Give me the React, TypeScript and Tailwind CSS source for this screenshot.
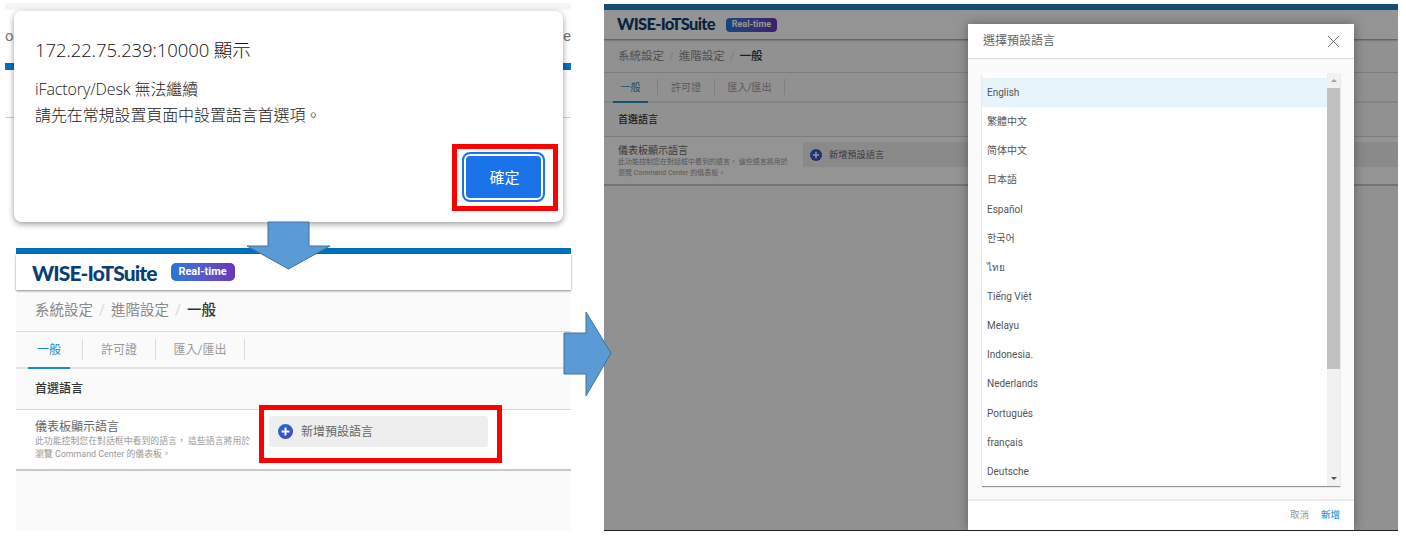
import React from "react";

const LANGUAGES = [
  "English",
  "繁體中文",
  "简体中文",
  "日本語",
  "Español",
  "한국어",
  "ไทย",
  "Tiếng Việt",
  "Melayu",
  "Indonesia.",
  "Nederlands",
  "Português",
  "français",
  "Deutsche",
];

const PlusIcon = ({ size }: { size: number }) => (
  <svg width={size} height={size} viewBox="0 0 16 16" className="shrink-0">
    <defs>
      <linearGradient id="plusFill" x1="0" y1="0" x2="1" y2="1">
        <stop offset="0" stopColor="#1f6fd0" />
        <stop offset="1" stopColor="#4a3fc4" />
      </linearGradient>
    </defs>
    <circle cx="8" cy="8" r="8" fill="url(#plusFill)" />
    <path d="M8 3.8v8.4M3.8 8h8.4" stroke="#fff" strokeWidth="2" />
  </svg>
);

const LargePage = () => (
  <div className="absolute left-[16px] top-[248px] flex h-[283px] w-[555px] flex-col bg-[#fafafa]">
    <div className="h-[6px] bg-[#0070ba]" />
    <div className="flex h-[36px] items-center gap-[14px] bg-white pl-[16px] shadow-[0_1px_2px_rgba(0,0,0,0.45)]">
      <span className="font-['Lato'] text-[21px] leading-none font-black tracking-[-0.9px] text-[#0b3f73]">WISE-IoTSuite</span>
      <span className="flex h-[18px] w-[64px] items-center justify-center rounded-[5px] bg-gradient-to-r from-[#1f78d8] to-[#6a35b8] text-[11px] font-bold text-white">
        Real-time
      </span>
    </div>
    <div className="flex h-[42px] items-center border-b border-[#d8d8d8] pl-[19px] text-[14.500px]">
      <span className="text-[#8a8a8a]">系統設定</span>
      <span className="mx-[6px] text-[#d8d8d8]">/</span>
      <span className="text-[#8a8a8a]">進階設定</span>
      <span className="mx-[6px] text-[#d8d8d8]">/</span>
      <span className="font-medium text-[#333]">一般</span>
    </div>
    <div className="flex h-[37px] border-b-2 border-[#e4e4e4] pl-[12px] text-[12px] text-[#9a9a9a]">
      <div className="flex h-[37px] w-[42px] items-center justify-center border-b-2 border-[#1c8ccc] text-[#1c8ccc]">一般</div>
      <div className="my-[7px] ml-[12px] w-px bg-[#dcdcdc]" />
      <div className="flex w-[72px] items-center justify-center">許可證</div>
      <div className="my-[7px] w-px bg-[#dcdcdc]" />
      <div className="flex w-[88px] items-center justify-center">匯入/匯出</div>
      <div className="my-[7px] w-px bg-[#dcdcdc]" />
    </div>
    <div className="flex h-[41px] items-center border-b border-[#d8d8d8] pl-[19px] text-[12px] font-medium text-[#333]">首選語言</div>
    <div className="flex h-[61px] justify-between border-b-2 border-[#c9c9c9] bg-white pl-[19px]">
      <div className="pt-[10px]">
        <div className="text-[12px] leading-[15px] text-[#666]">儀表板顯示語言</div>
        <div className="text-[8.900px] leading-[13px] whitespace-nowrap text-[#999]">
          <div>此功能控制您在對話框中看到的語言， 這些語言將用於</div>
          <div>瀏覽 Command Center 的儀表板。</div>
        </div>
      </div>
      <div className="mt-[6px] mr-[83px] flex h-[31px] w-[219px] items-center gap-[8px] rounded-[3px] bg-[#eeeeee] pl-[9px] text-[12px] text-[#666]">
        <PlusIcon size={15} />
        新增預設語言
      </div>
    </div>
  </div>
);

const DimmedPage = () => (
  <div className="flex h-full flex-col bg-[#fafafa]">
    <div className="h-[6px] bg-[#2a86c4]" />
    <div className="flex h-[29px] items-center gap-[11px] bg-white pl-[13px] shadow-[0_1px_2px_rgba(0,0,0,0.45)]">
      <span className="font-['Lato'] text-[16.500px] leading-none font-black tracking-[-0.7px] text-[#0b3f73]">WISE-IoTSuite</span>
      <span className="flex h-[14px] w-[51px] items-center justify-center rounded-[4px] bg-gradient-to-r from-[#1f78d8] to-[#6a35b8] text-[9px] font-bold text-white">
        Real-time
      </span>
    </div>
    <div className="flex h-[34px] items-center border-b border-[#d8d8d8] pt-[2px] pl-[14px] text-[11.500px]">
      <span className="text-[#8a8a8a]">系統設定</span>
      <span className="mx-[5px] text-[#d8d8d8]">/</span>
      <span className="text-[#8a8a8a]">進階設定</span>
      <span className="mx-[5px] text-[#d8d8d8]">/</span>
      <span className="font-medium text-[#333]">一般</span>
    </div>
    <div className="flex h-[30px] border-b-2 border-[#e4e4e4] pl-[9px] text-[10px] text-[#9a9a9a]">
      <div className="flex h-[30px] w-[35px] items-center justify-center border-b-2 border-[#1c8ccc] text-[#1c8ccc]">一般</div>
      <div className="my-[6px] ml-[9px] w-px bg-[#dcdcdc]" />
      <div className="flex w-[56px] items-center justify-center">許可證</div>
      <div className="my-[6px] w-px bg-[#dcdcdc]" />
      <div className="flex w-[69px] items-center justify-center">匯入/匯出</div>
      <div className="my-[6px] w-px bg-[#dcdcdc]" />
    </div>
    <div className="flex h-[34px] items-center border-b border-[#d8d8d8] pl-[14px] text-[10px] font-medium text-[#333]">首選語言</div>
    <div className="flex h-[49px] border-b-2 border-[#c9c9c9] bg-white pl-[14px]">
      <div className="w-[185px] pt-[7px]">
        <div className="text-[10px] leading-[13px] text-[#666]">儀表板顯示語言</div>
        <div className="text-[7px] leading-[11px] whitespace-nowrap text-[#999]">
          <div>此功能控制您在對話框中看到的語言， 這些語言將用於</div>
          <div>瀏覽 Command Center 的儀表板。</div>
        </div>
      </div>
      <div className="mt-[5px] flex h-[25px] flex-1 items-center gap-[7px] bg-[#eeeeee] pl-[7px] text-[9.200px] text-[#666]">
        <PlusIcon size={12} />
        新增預設語言
      </div>
    </div>
    <div className="absolute inset-0 bg-black/42" />
  </div>
);

const LanguageDialog = () => (
  <div className="absolute left-[364px] top-[20px] flex h-[506px] w-[386px] flex-col rounded-t-[2px] bg-[#fafafa] shadow-[0_0_12px_rgba(0,0,0,0.35)]">
    <div className="flex h-[35px] items-center justify-between border-b border-[#dcdcdc] bg-white pr-[14px] pl-[15px] text-[12px] text-[#666]">
      選擇預設語言
      <svg width="13" height="13" viewBox="0 0 13 13" fill="none" stroke="#777" strokeWidth="1">
        <path d="M1 1l11 11M12 1L1 12" />
      </svg>
    </div>
    <div className="mx-[14px] mt-[14px] flex h-[413px] shadow-[0_1px_1px_rgba(0,0,0,0.4)]">
      <div className="flex-1 bg-white pt-[5px]">
        {LANGUAGES.map((lang, i) => (
          <div
            key={lang}
            className={`flex h-[29.150px] items-center pl-[5px] text-[10px] text-[#555] ${i === 0 ? "bg-[#e8f4fb]" : ""}`}
          >
            {lang}
          </div>
        ))}
      </div>
      <div className="flex w-[13px] flex-col bg-[#f1f1f1]">
        <div className="flex h-[15px] items-center justify-center">
          <div className="h-0 w-0 border-x-[3px] border-b-[3px] border-x-transparent border-b-[#a3a3a3]" />
        </div>
        <div className="h-[281px] bg-[#c1c1c1]" />
        <div className="flex-1" />
        <div className="flex h-[15px] items-center justify-center">
          <div className="h-0 w-0 border-x-[3px] border-t-[3px] border-x-transparent border-t-[#505050]" />
        </div>
      </div>
    </div>
    <div className="mt-[13px] flex h-[31px] flex-1 items-center justify-end gap-[12px] border-t-2 border-[#ececec] bg-white pr-[14px] text-[9.500px]">
      <span className="text-[#999]">取消</span>
      <span className="font-medium text-[#2a9ad6]">新增</span>
    </div>
  </div>
);

const AlertBackdrop = () => (
  <div className="absolute left-[5px] top-[3px] flex h-[115px] w-[566px] flex-col border-b border-[#cfcfcf] bg-white">
    <div className="h-[7px] bg-[#f5f5f5]" />
    <div className="flex h-[53px] items-center justify-between text-[15px] text-[#777]">
      <span>oi</span>
      <span>e</span>
    </div>
    <div className="h-[7px] bg-[#0070ba]" />
  </div>
);

const AlertDialog = () => (
  <div className="absolute left-[14px] top-[11px] h-[211px] w-[549px] rounded-[8px] bg-white pt-[25px] pl-[21px] shadow-[0_2px_6px_rgba(0,0,0,0.4)] font-['Open_Sans','Noto_Sans_CJK_TC',sans-serif]">
    <div className="text-[18.500px] leading-[28px] font-light tracking-[-0.1px] text-[#111]">172.22.75.239:10000 顯示</div>
    <div className="mt-[12px] text-[16px] leading-[26px] font-light tracking-[-0.1px] text-[#222]">
      <div>iFactory/Desk 無法繼續</div>
      <div>請先在常規設置頁面中設置語言首選項。</div>
    </div>
    <div className="absolute top-[143px] left-[450px] flex h-[46px] w-[79px] items-center justify-center rounded-[6px] bg-[#1a73e8] pl-[2px] text-[15px] text-white ring-2 ring-white ring-inset outline-2 outline-[#1a73e8]">
      確定
    </div>
  </div>
);

const DownArrow = () => (
  <svg className="absolute left-[245px] top-[221px]" width="87" height="49" viewBox="0 0 87 49">
    <path d="M23 1h41v24h21L43.500 48 2 25h21z" fill="#5b9bd5" stroke="#41719c" />
  </svg>
);

const RightArrow = () => (
  <svg className="absolute left-[563px] top-[311px]" width="50" height="86" viewBox="0 0 50 86">
    <path d="M1 22h22V1l25 41-25 43V63H1z" fill="#5b9bd5" stroke="#41719c" />
  </svg>
);

export default function App() {
  return (
    <div className="relative h-[541px] w-[1406px] overflow-hidden bg-white font-['Roboto','Noto_Sans_CJK_TC','Noto_Sans_CJK_KR','Noto_Sans',sans-serif]">
      <AlertBackdrop />
      <LargePage />
      <AlertDialog />
      <div className="absolute left-[452px] top-[144px] h-[67px] w-[106px] border-[5px] border-[#ff0000]" />
      <div className="absolute left-[259px] top-[405px] h-[58px] w-[243px] border-[5px] border-[#ff0000]" />
      <DownArrow />
      <div className="absolute left-[604px] top-[4px] h-[527px] w-[794px] overflow-hidden border-b border-[#222]">
        <DimmedPage />
        <LanguageDialog />
      </div>
      <RightArrow />
    </div>
  );
}
